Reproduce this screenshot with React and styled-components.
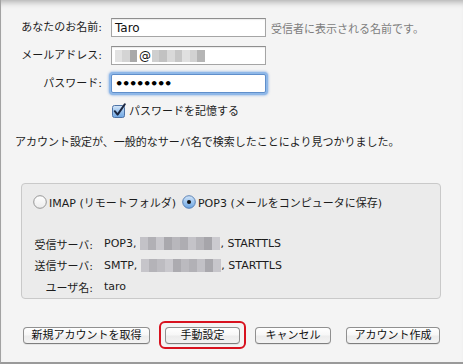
import React from "react";
import styled, { createGlobalStyle } from "styled-components";

const Global = createGlobalStyle`
  html, body { margin: 0; padding: 0; background: #f4f4f4; }
  * { box-sizing: border-box; }
`;

const Window = styled.div`
  width: 463px;
  height: 364px;
  background: #f4f4f4;
  border-left: 1px solid #a2a2a2;
  border-bottom: 2px solid #9a9a9a;
  box-shadow: inset 0 7px 6px -5px rgba(0, 0, 0, 0.3);
  font-family: "DejaVu Sans", "Noto Sans CJK JP", sans-serif;
  font-size: 11px;
  color: #1c1c1c;
  display: flex;
  flex-direction: column;
  padding-top: 18px;
  overflow: hidden;
`;

const Form = styled.div`
  display: grid;
  grid-template-columns: 110px 155px auto;
  row-gap: 9px;
  align-items: center;
`;

const Label = styled.label`
  text-align: right;
  padding-right: 9px;
  line-height: 19px;
  white-space: nowrap;
`;

const Field = styled.div`
  height: ${(p) => (p.$h || 19)}px;
  background: #fff;
  border: 1px solid ${(p) => (p.$focus ? "#5f8fcb" : "#a5a5a5")};
  border-top-color: ${(p) => (p.$focus ? "#5f8fcb" : "#8e8e8e")};
  border-radius: ${(p) => (p.$focus ? "2px" : "0")};
  box-shadow: ${(p) => (p.$focus ? "0 0 0 2px #8fb8e8, 0 0 2px 3px rgba(120,165,225,0.5)" : "inset 0 1px 1px rgba(0,0,0,0.08)")};
  display: flex;
  align-items: center;
  padding-left: 3px;
  font-size: 12px;
  color: #111;
  white-space: nowrap;
  overflow: hidden;
`;

const Hint = styled.span`
  margin-left: 5px;
  color: #7d7d7d;
  white-space: nowrap;
`;

const Dots = styled.span`
  font-size: 13px;
  letter-spacing: -1.3px;
  font-weight: bold;
  padding-left: 0;
  color: #000;
`;

const MosaicWrap = styled.span`
  display: inline-flex;
  vertical-align: middle;
  height: ${(p) => p.$h}px;
  margin: ${(p) => p.$m || "0"};
`;

const Cell = styled.span`
  display: block;
  width: ${(p) => p.$w}px;
  height: 100%;
`;

const Mosaic = ({ cells, w = 8, h = 12, m }) => (
  <MosaicWrap $h={h} $m={m}>
    {cells.map((c, i) => (
      <Cell key={i} $w={w} style={{ background: c }} />
    ))}
  </MosaicWrap>
);

const CheckRow = styled.div`
  grid-column: 2 / span 2;
  display: flex;
  align-items: center;
  gap: 3px;
  margin-top: 1px;
  padding-left: 1px;
  height: 14px;
  white-space: nowrap;
`;

const Message = styled.p`
  margin: 18px 0 0 0;
  padding-left: 14px;
  line-height: 16px;
  white-space: nowrap;
`;

const Group = styled.div`
  margin: 32px 0 0 20px;
  width: 420px;
  height: 116px;
  background: #ebebeb;
  border: 1px solid #c9c9c9;
  border-radius: 4px;
  padding: 10px 11px 0 11px;
  display: flex;
  flex-direction: column;
`;

const RadioRow = styled.div`
  display: flex;
  align-items: center;
  gap: 6px;
  height: 16px;
`;

const RadioItem = styled.label`
  display: flex;
  align-items: center;
  gap: 2px;
  white-space: nowrap;
`;

const Info = styled.div`
  margin-top: 23px;
  display: grid;
  grid-template-columns: 60px auto;
  column-gap: 11px;
  grid-auto-rows: 21.5px;
  align-items: center;
`;

const InfoLabel = styled.span`
  text-align: right;
  white-space: nowrap;
`;

const InfoValue = styled.span`
  white-space: nowrap;
  display: flex;
  align-items: center;
`;

const ButtonBar = styled.div`
  margin-top: 28px;
  padding-left: 22px;
  display: flex;
  gap: 15px;
`;

const Button = styled.button`
  width: ${(p) => p.$w}px;
  height: 17px;
  padding: 0;
  border: 1px solid #909090;
  border-bottom-color: #7e7e7e;
  border-radius: 4px;
  background: linear-gradient(#ffffff, #f7f7f7 45%, #ececec 55%, #f3f3f3);
  box-shadow: 0 1px 0 rgba(0, 0, 0, 0.06);
  font-family: "DejaVu Sans", "Noto Sans CJK JP", sans-serif;
  font-size: 11px;
  color: #111;
  line-height: 15px;
  white-space: nowrap;
`;

const Highlight = styled.span`
  position: relative;
  display: flex;
  &::after {
    content: "";
    position: absolute;
    left: -6px;
    right: -6px;
    top: -6px;
    bottom: -5px;
    border: 2px solid #d8121f;
    border-radius: 6px;
    pointer-events: none;
  }
`;

const CheckBox = () => (
  <svg width="14" height="15" viewBox="0 0 14 15">
    <defs>
      <linearGradient id="cb" x1="0" y1="0" x2="0" y2="1">
        <stop offset="0" stopColor="#d6e7f8" />
        <stop offset="0.5" stopColor="#9cc4ee" />
        <stop offset="1" stopColor="#6fa6e2" />
      </linearGradient>
    </defs>
    <rect x="0.5" y="2.5" width="12" height="12" rx="2" fill="url(#cb)" stroke="#4e73a6" />
    <path d="M2.8 8.2 L5.6 11.6 L12.8 1.2" fill="none" stroke="#1a2640" strokeWidth="2" strokeLinecap="round" strokeLinejoin="round" />
  </svg>
);

const Radio = ({ checked }) => (
  <svg width="14" height="14" viewBox="0 0 14 14">
    <defs>
      <linearGradient id="ru" x1="0" y1="0" x2="0" y2="1">
        <stop offset="0" stopColor="#ffffff" />
        <stop offset="1" stopColor="#ececec" />
      </linearGradient>
      <linearGradient id="rc" x1="0" y1="0" x2="0" y2="1">
        <stop offset="0" stopColor="#d3e5f8" />
        <stop offset="0.5" stopColor="#9ec5ee" />
        <stop offset="1" stopColor="#6aa3e0" />
      </linearGradient>
    </defs>
    <circle cx="7" cy="7" r="6.3" fill={checked ? "url(#rc)" : "url(#ru)"} stroke={checked ? "#5079b0" : "#8c8c8c"} strokeWidth="0.9" />
    {checked && <circle cx="7" cy="7" r="2" fill="#111" />}
  </svg>
);

const hostA = ["#c3c2c7", "#b1b0b5", "#c8c7cc", "#a9a8ad", "#b8b7bc", "#aeadb2", "#c4c3c8", "#b5b4b9", "#a6a5aa", "#cbcacf"];
const hostB = ["#c6c5ca", "#b4b3b8", "#bdbcc1", "#c9c8cd", "#acabb0", "#bbbabf", "#b2b1b6", "#c2c1c6", "#a9a8ad", "#c7c6cb"];

export default function App() {
  return (
    <>
      <Global />
      <Window>
        <Form>
          <Label>あなたのお名前:</Label>
          <Field>Taro</Field>
          <Hint>受信者に表示される名前です。</Hint>

          <Label>メールアドレス:</Label>
          <Field>
            <Mosaic cells={["#e2e2e2", "#d4d4d4", "#a9a9a9"]} w={7.3} h={12} />
            <span style={{ marginLeft: 2 }}>@</span>
            <Mosaic cells={["#cfcfcf", "#c2c2c2", "#d9d9d9", "#c6c6c6", "#e0e0e0", "#d2d2d2", "#b5b5b5"]} w={7.6} h={12} m="0 0 0 1px" />
          </Field>
          <span />

          <Label>パスワード:</Label>
          <Field $focus>
            <Dots>••••••••</Dots>
          </Field>
          <span />

          <span />
          <CheckRow>
            <CheckBox />
            <span>パスワードを記憶する</span>
          </CheckRow>
        </Form>

        <Message>アカウント設定が、一般的なサーバ名で検索したことにより見つかりました。</Message>

        <Group>
          <RadioRow>
            <RadioItem>
              <Radio />
              <span>IMAP (リモートフォルダ)</span>
            </RadioItem>
            <RadioItem>
              <Radio checked />
              <span>POP3 (メールをコンピュータに保存)</span>
            </RadioItem>
          </RadioRow>
          <Info>
            <InfoLabel>受信サーバ:</InfoLabel>
            <InfoValue>
              POP3, <Mosaic cells={hostA} w={8} h={13} m="0 0 0 4px" />, STARTTLS
            </InfoValue>
            <InfoLabel>送信サーバ:</InfoLabel>
            <InfoValue>
              SMTP, <Mosaic cells={hostB} w={8} h={13} m="0 0 0 4px" />, STARTTLS
            </InfoValue>
            <InfoLabel>ユーザ名:</InfoLabel>
            <InfoValue>taro</InfoValue>
          </Info>
        </Group>

        <ButtonBar>
          <Button $w={127}>新規アカウントを取得</Button>
          <Highlight>
            <Button $w={75}>手動設定</Button>
          </Highlight>
          <Button $w={76}>キャンセル</Button>
          <Button $w={94}>アカウント作成</Button>
        </ButtonBar>
      </Window>
    </>
  );
}
